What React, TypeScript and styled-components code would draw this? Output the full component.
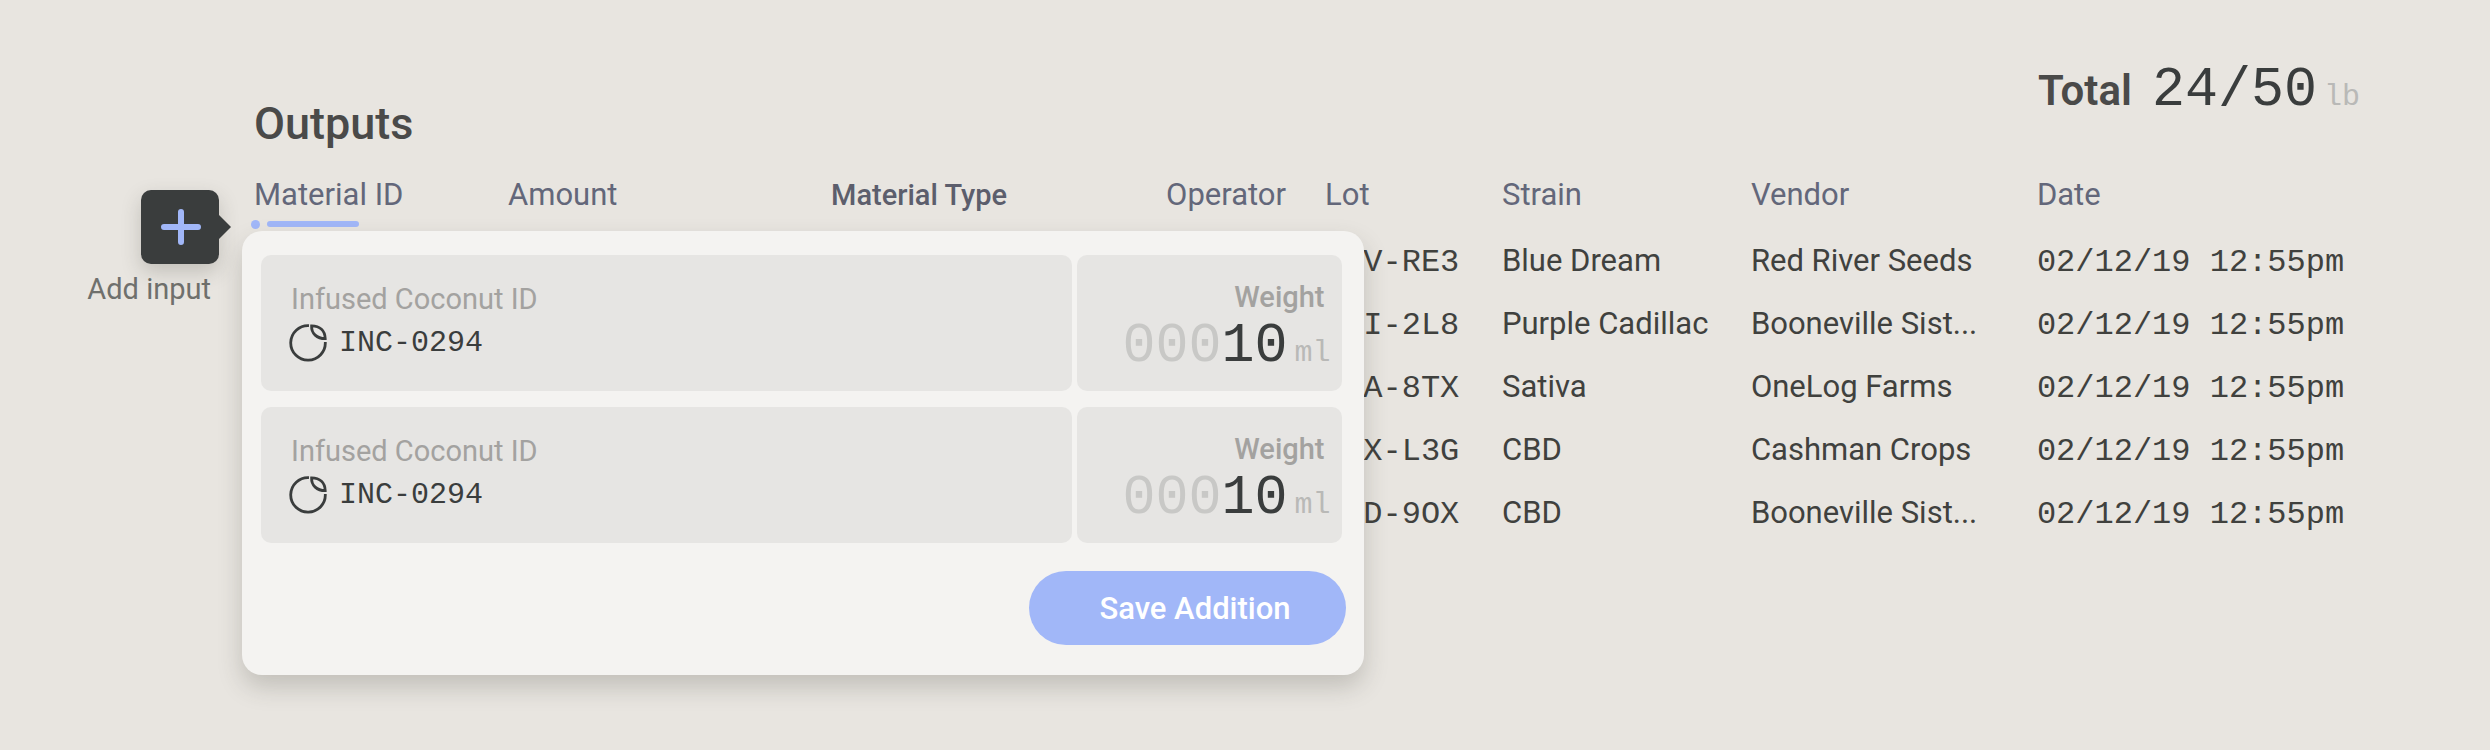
import React from "react";
import styled, { createGlobalStyle, css } from "styled-components";

const color = {
  page: "#e8e5e0",
  panel: "#f4f3f1",
  card: "#e6e5e3",
  accent: "#a1b7f8",
  dark: "#3a3d3d",
  text: "#40413e",
  title: "#4a4a49",
  header: "#63677a",
  label: "#a3a2a0",
  ghost: "#c8c8c6",
};

const sans = `Roboto, "Liberation Sans", sans-serif`;
const mono = `"Liberation Mono", monospace`;

const GlobalStyle = createGlobalStyle`
  * { box-sizing: border-box; }
  body {
    margin: 0;
    background: ${color.page};
    color: ${color.text};
    font-family: ${sans};
    font-size: 31px;
  }
`;

const Page = styled.main`
  display: grid;
  grid-template-columns: 131px minmax(0, 1fr);
  align-content: start;
  column-gap: 35px;
  row-gap: 12px;
  min-height: 100vh;
  padding: 59px 130px 76px 88px;
`;

const Header = styled.header`
  grid-column: 2;
  display: flex;
  justify-content: space-between;
  align-items: flex-start;
`;

const Title = styled.h1`
  margin: 0;
  padding-top: 41px;
  font-size: 45px;
  font-weight: 500;
  line-height: 48px;
  color: ${color.title};
`;

const Total = styled.div`
  display: flex;
  align-items: baseline;
  line-height: 64px;
`;

const TotalLabel = styled.span`
  margin-right: 20px;
  font-size: 42px;
  font-weight: 600;
  color: ${color.title};
`;

const Figure = styled.span<{ $ghost?: boolean }>`
  font-family: ${mono};
  font-size: 55px;
  color: ${(p) => (p.$ghost ? color.ghost : color.dark)};
`;

const Unit = styled.span`
  font-family: ${mono};
  font-size: 30px;
  color: #b9b9b7;
  margin-left: 7px;
`;

const AddColumn = styled.div`
  display: flex;
  flex-direction: column;
  align-items: flex-end;
  padding-top: 30px;
`;

const AddButton = styled.button`
  position: relative;
  display: grid;
  place-items: center;
  width: 78px;
  height: 74px;
  padding: 0;
  border: 0;
  border-radius: 10px;
  background: ${color.dark};
  box-shadow: 0 8px 20px rgba(58, 61, 50, 0.22);

  &::after {
    content: "";
    position: absolute;
    left: 100%;
    top: 25px;
    border-left: 12px solid ${color.dark};
    border-top: 12px solid transparent;
    border-bottom: 12px solid transparent;
  }
`;

const AddLabel = styled.label`
  margin-top: 9px;
  padding-right: 8px;
  font-size: 29px;
  line-height: 32px;
  white-space: nowrap;
  color: #6f706d;
`;

const Outputs = styled.section`
  position: relative;
`;

const Table = styled.table`
  width: 100%;
  table-layout: fixed;
  border-collapse: collapse;
`;

const HeadCell = styled.th<{ $strong?: boolean }>`
  height: 70px;
  padding: 15px 0 0;
  text-align: left;
  vertical-align: baseline;
  white-space: nowrap;
  line-height: 40px;
  font-weight: 400;
  color: ${color.header};
  ${(p) =>
    p.$strong &&
    css`
      font-size: 29px;
      font-weight: 500;
      color: #5c5e6c;
    `}
`;

const SortMark = styled.span`
  display: flex;
  align-items: center;
  gap: 7px;
  height: 10px;
  margin: 4px 0 0 -3px;

  &::before {
    content: "";
    width: 9px;
    height: 9px;
    border-radius: 50%;
    background: ${color.accent};
  }

  &::after {
    content: "";
    width: 92px;
    height: 6px;
    border-radius: 3px;
    background: ${color.accent};
  }
`;

const Cell = styled.td<{ $mono?: boolean; $inset?: boolean }>`
  height: 63px;
  padding: 11px 0 0 ${(p) => (p.$inset ? "19px" : "0")};
  vertical-align: baseline;
  white-space: nowrap;
  line-height: 40px;
  ${(p) =>
    p.$mono &&
    css`
      font-family: ${mono};
      font-size: 32px;
    `}
`;

const Popover = styled.form`
  position: absolute;
  top: 71px;
  left: -12px;
  width: 53.3%;
  display: flex;
  flex-direction: column;
  gap: 16px;
  padding: 24px 18px 30px 19px;
  border-radius: 20px;
  background: ${color.panel};
  box-shadow: 0 12px 24px rgba(58, 61, 50, 0.22);
`;

const Addition = styled.div`
  display: grid;
  grid-template-columns: minmax(0, 1fr) 265px;
  gap: 5px;
  padding-right: 4px;
`;

const Card = styled.div<{ $end?: boolean }>`
  display: flex;
  flex-direction: column;
  height: 136px;
  border-radius: 10px;
  background: ${color.card};
  align-items: ${(p) => (p.$end ? "flex-end" : "flex-start")};
  gap: ${(p) => (p.$end ? "5px" : "9px")};
  padding: ${(p) => (p.$end ? "26px 12px 0" : "28px 28px 0")};
`;

const cardLabel = css`
  padding: 0 6px 0 2px;
  font-size: 29px;
  font-weight: 500;
  line-height: 32px;
  color: ${color.label};
`;

const CardTitle = styled.span`
  ${cardLabel}
  font-weight: 400;
`;

const CardLabel = styled.label`
  ${cardLabel}
`;

const Material = styled.div`
  display: flex;
  align-items: center;
  gap: 12px;
  font-family: ${mono};
  font-size: 30px;
  line-height: 38px;
  color: ${color.dark};
`;

const Measure = styled.div`
  display: flex;
  align-items: baseline;
  line-height: 56px;
`;

const WeightInput = styled.input`
  width: 66px;
  height: 56px;
  padding: 0;
  border: 0;
  outline: 0;
  background: transparent;
  font-family: ${mono};
  font-size: 55px;
  color: ${color.dark};
`;

const SaveButton = styled.button`
  align-self: flex-end;
  width: 317px;
  height: 74px;
  margin-top: 12px;
  padding: 0 0 0 14px;
  border: 0;
  border-radius: 37px;
  background: ${color.accent};
  font-family: ${sans};
  font-size: 31px;
  font-weight: 500;
  color: #fff;
`;

const PlusIcon = () => (
  <svg width="42" height="38" viewBox="0 0 42 38" fill="none" aria-hidden="true">
    <path d="M22 4v30M5 19h34" stroke={color.accent} strokeWidth="6" strokeLinecap="round" />
  </svg>
);

const CoconutIcon = () => (
  <svg width="38" height="38" viewBox="0 0 38 38" fill="none" stroke={color.dark} strokeWidth="2.8" aria-hidden="true">
    <path d="M20 1.600A17.300 17.300 0 1 0 36.300 18" />
    <path d="M22.600 1.900C31 2 36 6.800 36.200 14.600C28 14.600 22.200 9.500 22.600 1.900Z" />
  </svg>
);

const columns = [
  { name: "Material ID", width: "12.06%", sorted: true },
  { name: "Amount", width: "15.34%" },
  { name: "Material Type", width: "15.91%", strong: true },
  { name: "Operator", width: "7.55%" },
  { name: "Lot", width: "8.4%" },
  { name: "Strain", width: "11.82%" },
  { name: "Vendor", width: "13.58%" },
  { name: "Date", width: "auto" },
];

const rows = [
  { lot: "RV-RE3", strain: "Blue Dream", vendor: "Red River Seeds", date: "02/12/19 12:55pm" },
  { lot: "RI-2L8", strain: "Purple Cadillac", vendor: "Booneville Sist...", date: "02/12/19 12:55pm" },
  { lot: "RA-8TX", strain: "Sativa", vendor: "OneLog Farms", date: "02/12/19 12:55pm" },
  { lot: "RX-L3G", strain: "CBD", vendor: "Cashman Crops", date: "02/12/19 12:55pm" },
  { lot: "RD-9OX", strain: "CBD", vendor: "Booneville Sist...", date: "02/12/19 12:55pm" },
];

const additions = [
  { key: "first", title: "Infused Coconut ID", id: "INC-0294", amount: "10" },
  { key: "second", title: "Infused Coconut ID", id: "INC-0294", amount: "10" },
];

export default function App() {
  return (
    <>
      <GlobalStyle />
      <Page>
        <Header>
          <Title>Outputs</Title>
          <Total>
            <TotalLabel>Total</TotalLabel>
            <Figure>24/50</Figure>
            <Unit as="small">lb</Unit>
          </Total>
        </Header>

        <AddColumn>
          <AddButton id="add-input" type="button">
            <PlusIcon />
          </AddButton>
          <AddLabel htmlFor="add-input">Add input</AddLabel>
        </AddColumn>

        <Outputs>
          <Table>
            <colgroup>
              {columns.map((c) => (
                <col key={c.name} width={c.width === "auto" ? undefined : c.width} />
              ))}
            </colgroup>
            <thead>
              <tr>
                {columns.map((c) => (
                  <HeadCell key={c.name} scope="col" $strong={c.strong}>
                    {c.name}
                    {c.sorted && <SortMark />}
                  </HeadCell>
                ))}
              </tr>
            </thead>
            <tbody>
              {rows.map((r) => (
                <tr key={r.lot}>
                  <Cell />
                  <Cell />
                  <Cell />
                  <Cell />
                  <Cell $mono $inset>
                    {r.lot}
                  </Cell>
                  <Cell>{r.strain}</Cell>
                  <Cell>{r.vendor}</Cell>
                  <Cell $mono>{r.date}</Cell>
                </tr>
              ))}
            </tbody>
          </Table>

          <Popover onSubmit={(e) => e.preventDefault()}>
            {additions.map((a) => (
              <Addition key={a.key}>
                <Card>
                  <CardTitle>{a.title}</CardTitle>
                  <Material>
                    <CoconutIcon />
                    {a.id}
                  </Material>
                </Card>
                <Card $end>
                  <CardLabel htmlFor={`weight-${a.key}`}>Weight</CardLabel>
                  <Measure>
                    <Figure $ghost>000</Figure>
                    <WeightInput id={`weight-${a.key}`} defaultValue={a.amount} inputMode="numeric" />
                    <Unit>ml</Unit>
                  </Measure>
                </Card>
              </Addition>
            ))}
            <SaveButton type="submit">Save Addition</SaveButton>
          </Popover>
        </Outputs>
      </Page>
    </>
  );
}
